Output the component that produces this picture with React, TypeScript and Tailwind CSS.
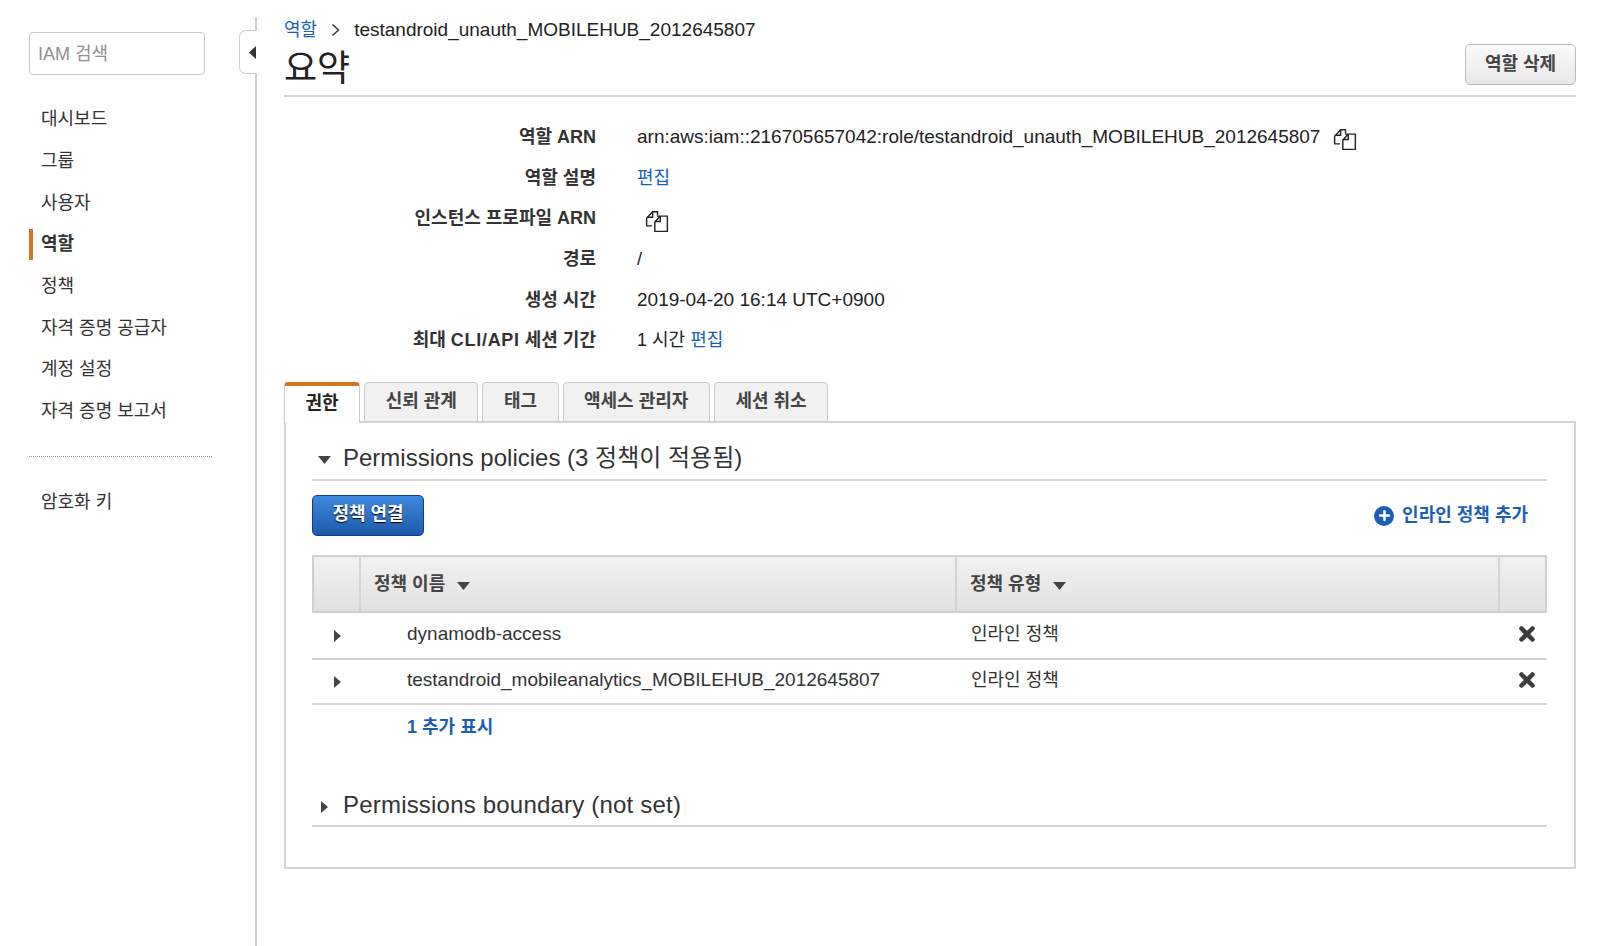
import React from 'react';
import { Plus, X } from 'lucide-react';

const navItems = ['대시보드', '그룹', '사용자', '역할', '정책', '자격 증명 공급자', '계정 설정', '자격 증명 보고서'];
const tabs = ['권한', '신뢰 관계', '태그', '액세스 관리자', '세션 취소'];
const policies = ['dynamodb-access', 'testandroid_mobileanalytics_MOBILEHUB_2012645807'];

const CopyIcon = () => (
  <svg width="24" height="24" viewBox="0 0 22 22" fill="none" stroke="#222" strokeWidth="1.3" className="shrink-0">
    <path d="M6.5 15.5H1.5V8.5L7 2.5H11.5V6" />
    <path d="M7 2.5V7.5H2" />
    <path d="M11 6.5H20.5V20.5H9V12L14 6.5Z" fill="#fff" />
    <path d="M14 6.5V11.5H9" />
  </svg>
);

const CaretDown = ({ className = '' }: { className?: string }) => (
  <svg width="13" height="8" viewBox="0 0 13 8" className={className}><path d="M0 0H13L6.5 8Z" fill="#444" /></svg>
);

const CaretRight = () => (
  <svg width="7" height="12" viewBox="0 0 7 12"><path d="M0 0L7 6L0 12Z" fill="#444" /></svg>
);

const Sidebar = () => (
  <aside className="w-[256px] h-[946px] shrink-0 relative pl-[29px] pt-[32px]">
    <div className="w-[176px] h-[43px] border border-[#c8c8c8] rounded-[4px] flex items-center pl-2 pt-0.5 text-[18px] text-[#8f8f8f]">IAM 검색</div>
    <ul className="mt-[24px]">
      {navItems.map(item => (
        <li key={item} className="h-[41.7px] flex items-center text-[18px] text-[#333]">
          {item === '역할'
            ? <div className="h-[31px] flex items-center border-l-4 border-[#d4761c] pl-2 font-bold">{item}</div>
            : <div className="pl-3">{item}</div>}
        </li>
      ))}
    </ul>
    <div className="w-[183px] mt-[23px] border-t border-dotted border-[#999]" />
    <div className="pl-3 mt-[33px] text-[18px] text-[#333] leading-[24px]">암호화 키</div>
    <div className="absolute -right-px top-[17px] bottom-0 w-0.5 bg-[#d0d0d0]" />
    <div className="absolute left-[239px] top-[30px] w-[18px] h-[44px] bg-white border border-r-0 border-[#d0d0d0] rounded-l-[7px] flex items-center pl-[9px]">
      <svg width="7" height="13" viewBox="0 0 7 13"><path d="M7 0L0 6.5L7 13Z" fill="#333" /></svg>
    </div>
  </aside>
);

const Row = ({ label, children }: { label: React.ReactNode; children?: React.ReactNode }) => (
  <div className="flex items-center h-[40.7px]">
    <div className="w-[312px] text-right font-bold text-[#333]">{label}</div>
    <div className="ml-[41px] flex items-center text-[#222]">{children}</div>
  </div>
);

const Summary = () => (
  <div className="mt-[20px]">
    <Row label="역할 ARN">
      <span className="text-[19px]">arn:aws:iam::216705657042:role/testandroid_unauth_MOBILEHUB_2012645807</span>
      <span className="ml-[13px] mt-1"><CopyIcon /></span>
    </Row>
    <Row label="역할 설명"><span className="text-[#1a5fb4]">편집</span></Row>
    <Row label="인스턴스 프로파일 ARN"><span className="ml-2 mt-1"><CopyIcon /></span></Row>
    <Row label="경로">/</Row>
    <Row label="생성 시간"><span className="text-[19px]">2019-04-20 16:14 UTC+0900</span></Row>
    <Row label={<>최대 <span className="tracking-[0.7px]">CLI/API</span> 세션 기간</>}>1 시간&nbsp;<span className="text-[#1a5fb4]">편집</span></Row>
  </div>
);

const Tabs = () => (
  <div className="flex mt-[21px] h-[40px] gap-[4px] relative z-10">
    {tabs.map((tab, i) => (
      <div
        key={tab}
        className={i === 0
          ? 'h-[41px] px-[20.5px] pb-0.5 flex items-center font-bold text-[#222] bg-white border-x border-[#ccc] border-t-4 border-t-[#d4761c] rounded-t-[4px]'
          : 'h-[40px] px-[20.5px] pb-0.5 flex items-center font-bold text-[#444] bg-[#f1f1f1] border border-[#ccc] rounded-t-[4px]'}
      >
        {tab}
      </div>
    ))}
  </div>
);

const PolicyTable = () => (
  <div className="mt-[19px]">
    <div className="flex h-[58px] border-2 border-[#d0d0d0] bg-gradient-to-b from-[#f1f1f1] to-[#e2e2e2] font-bold text-[#444]">
      <div className="w-[47px] border-r-2 border-[#d4d4d4]" />
      <div className="w-[596px] border-r-2 border-[#d4d4d4] pl-[13px] flex items-center">
        정책 이름<CaretDown className="ml-3 mt-1" />
      </div>
      <div className="flex-1 border-r-2 border-[#d4d4d4] pl-[13px] flex items-center">
        정책 유형<CaretDown className="ml-3 mt-1" />
      </div>
      <div className="w-[45px]" />
    </div>
    {policies.map((policy, i) => (
      <div key={policy} className={`flex items-center pb-[2px] border-b-2 border-[#d4d4d4] text-[#333] ${i === 0 ? 'h-[46.5px]' : 'h-[45.5px]'}`}>
        <div className="w-[50px] pl-[22px] pt-1"><CaretRight /></div>
        <div className="w-[596px] pl-[45px] text-[19px]">{policy}</div>
        <div className="flex-1 pl-[13px]">인라인 정책</div>
        <X size={22} strokeWidth={5} className="text-[#3d3d3d] mr-[9px]" />
      </div>
    ))}
    <div className="pl-[95px] mt-[9px] font-bold text-[#1a5fb4] leading-[26px]">1 추가 표시</div>
  </div>
);

export default function App() {
  return (
    <div className="flex w-[1600px] h-[946px] overflow-hidden bg-white text-[18px] font-['Liberation_Sans','Noto_Sans_CJK_KR',sans-serif]">
      <Sidebar />
      <main className="w-[1292px] ml-[28px] pt-[18px]">
        <div className="flex items-center h-[24px] text-[18px]">
          <span className="text-[#1a5fb4]">역할</span>
          <svg width="9" height="14" viewBox="0 0 9 14" fill="none" stroke="#333" strokeWidth="1.4" className="mx-[14px]"><path d="M1.5 1.5L7.5 7L1.5 12.5" /></svg>
          <span className="text-[#222] text-[19px]">testandroid_unauth_MOBILEHUB_2012645807</span>
        </div>
        <div className="flex justify-between border-b-2 border-[#d4d4d4] h-[55px]">
          <h1 className="text-[36px] leading-[46px] text-[#222] pt-[4px]">요약</h1>
          <button className="w-[111px] h-[41px] mt-[2px] border border-[#bbb] rounded-[5px] bg-gradient-to-b from-[#fafafa] to-[#e8e8e8] font-bold text-[#444]">역할 삭제</button>
        </div>
        <Summary />
        <Tabs />
        <section className="h-[448px] border-2 border-[#d4d4d4] -mt-[1px] pl-[26px] pr-[27px]">
          <div className="flex items-center h-[58px] border-b-2 border-[#d4d4d4] text-[24px] text-[#333] pt-[14px]">
            <CaretDown className="ml-[6px] mr-[12px] mt-1" />
            Permissions policies (3 정책이 적용됨)
          </div>
          <div className="flex items-center justify-between mt-[14px]">
            <button className="w-[112px] h-[41px] pb-[2px] rounded-[5px] border border-[#0f3f80] bg-gradient-to-b from-[#4089e0] to-[#1a5aa8] text-white font-bold [text-shadow:0_1px_1px_#000]">정책 연결</button>
            <div className="flex items-center mr-[19px] font-bold text-[#1a5fb4]">
              <span className="w-[20px] h-[20px] mr-[8px] rounded-full bg-[#1a5fb4] flex items-center justify-center">
                <Plus size={15} strokeWidth={4} className="text-white" />
              </span>
              인라인 정책 추가
            </div>
          </div>
          <PolicyTable />
          <div className="flex items-center h-[42px] mt-[45px] border-b-2 border-[#d4d4d4] text-[24px] tracking-[0.2px] text-[#333]">
            <span className="ml-[9px] mr-[15px] mt-1"><CaretRight /></span>
            Permissions boundary (not set)
          </div>
        </section>
      </main>
    </div>
  );
}
